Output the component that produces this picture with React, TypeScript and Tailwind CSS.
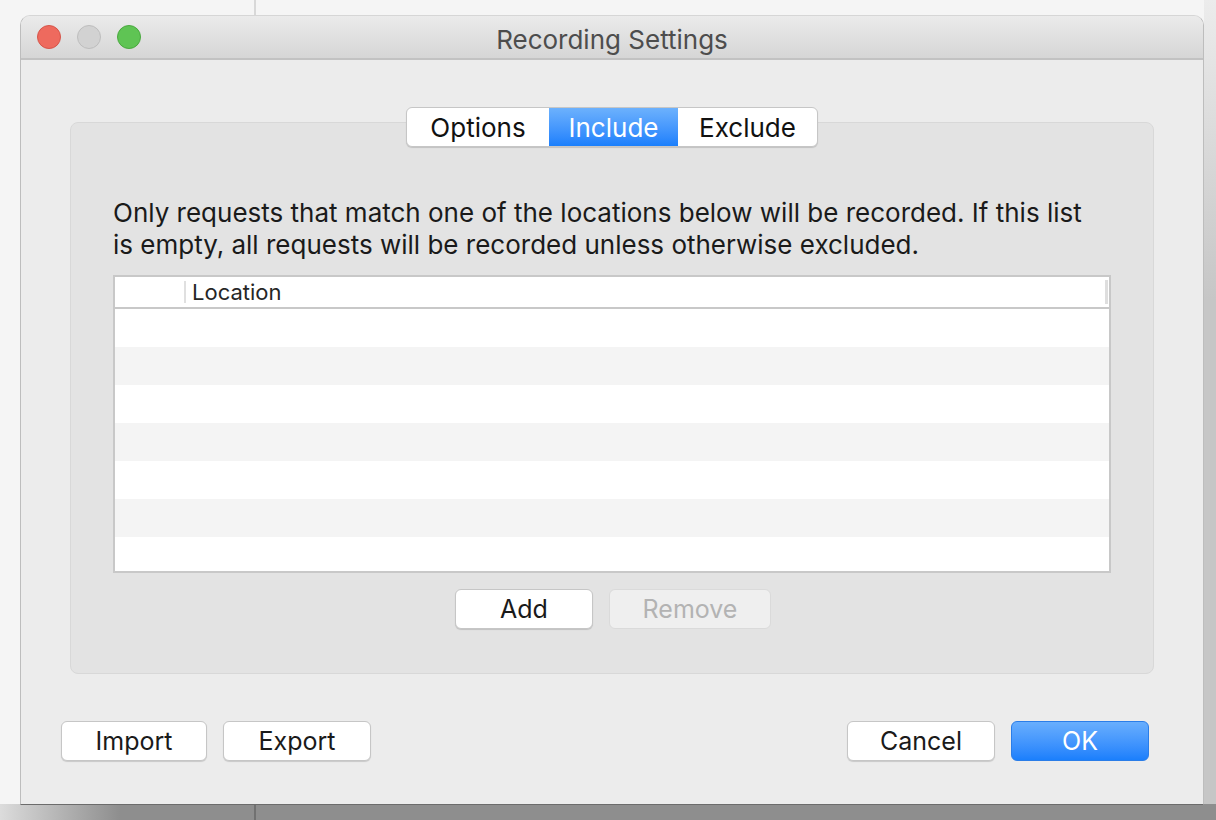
import React from "react";

const font = { fontFamily: "Inter, 'Liberation Sans', sans-serif" };

function TrafficLights() {
  return (
    <div className="flex items-center gap-4 pl-[16px]">
      <div className="w-6 h-6 rounded-full bg-[#ee6a5e] border border-[#d5554a]"></div>
      <div className="w-6 h-6 rounded-full bg-[#d2d2d2] border border-[#bdbdbd]"></div>
      <div className="w-6 h-6 rounded-full bg-[#5fc454] border border-[#4aa83f]"></div>
    </div>
  );
}

function Button({ label, wide = "w-[146px]", disabled = false, primary = false }: { label: string; wide?: string; disabled?: boolean; primary?: boolean }) {
  let cls = "bg-white text-[#1a1a1a] border border-[#c6c6c6] shadow-[0_1px_1px_rgba(0,0,0,0.15)]";
  if (disabled) cls = "bg-[#efefef] text-[#b3b3b3] border border-[#dadada]";
  if (primary) cls = "bg-linear-to-b from-[#68aefd] to-[#1a7ffc] text-white border border-[#2a7de8]";
  return (
    <button className={`${wide} h-10 rounded-[6px] text-[25px] leading-none flex items-center justify-center ${cls}`}>
      {label}
    </button>
  );
}

function LocationTable() {
  const rows = [0, 1, 2, 3, 4, 5, 6];
  return (
    <div className="mt-[14px] h-[298px] border-2 border-[#c8c8c8] bg-white flex flex-col overflow-hidden">
      <div className="h-8 flex items-center border-b-2 border-[#c8c8c8] shrink-0">
        <div className="w-[71px] h-[22px] border-r-2 border-[#e0e0e0]"></div>
        <div className="flex-1 pl-[6px] text-[22px] text-[#262626]">Location</div>
        <div className="w-[3px] h-[24px] bg-[#dedede] mr-[1px]"></div>
      </div>
      {rows.map((r) => (
        <div key={r} className={`h-[38px] shrink-0 ${r % 2 === 1 ? "bg-[#f4f4f4]" : "bg-white"}`}></div>
      ))}
    </div>
  );
}

export default function App() {
  return (
    <div className="relative w-[1216px] h-[820px] bg-[#f5f5f5] overflow-hidden" style={font}>
      <div className="absolute left-[254px] top-0 w-[2px] h-full bg-[#d8d8d8]"></div>
      <div className="absolute left-0 top-[804px] w-full h-[16px] bg-[#8e8e8e]"></div>
      <div className="absolute left-0 top-[804px] w-[120px] h-[16px] bg-linear-to-r from-[#dcdcdc] to-[#8e8e8e]"></div>
      <div className="absolute left-[254px] top-[804px] w-[2px] h-[16px] bg-[#717171]"></div>
      <div className="absolute right-0 top-0 w-[12px] h-[804px] bg-[#c6c6c6]"></div>
      <div className="absolute right-0 top-0 w-[12px] h-[300px] bg-linear-to-b from-[#ececec] to-[#c6c6c6]"></div>

      <div className="relative z-10 ml-[20px] pt-[15px] w-[1184px]">
        <div className="h-[790px] rounded-t-[10px] bg-[#ececec] border border-[#bdbdbd] border-t-[#d6d6d6] border-b-[#6c6c6c] flex flex-col overflow-hidden">
          <div className="h-[44px] shrink-0 bg-linear-to-b from-[#ebebeb] to-[#d6d6d6] border-b-2 border-[#c2c2c2] relative flex items-center">
            <TrafficLights />
            <div className="absolute inset-0 pt-[5px] flex items-center justify-center text-[26px] text-[#4d4d4d]">Recording Settings</div>
          </div>

          <div className="flex-1 flex flex-col px-[49px]">
            <div className="relative mt-[62px] h-[552px] rounded-[8px] bg-[#e3e3e3] border border-[#d8d8d8] px-[42px]">
              <div className="absolute -top-[16px] left-0 right-0 flex justify-center">
                <div className="flex h-10 rounded-[6px] overflow-hidden border border-[#c6c6c6] bg-white shadow-[0_1px_1px_rgba(0,0,0,0.15)] text-[26px]">
                  <div className="w-[142px] flex items-center justify-center text-[#111]">Options</div>
                  <div className="w-[129px] flex items-center justify-center text-white bg-linear-to-b from-[#6cb1fd] to-[#1a7ffc]">Include</div>
                  <div className="w-[139px] flex items-center justify-center text-[#111]">Exclude</div>
                </div>
              </div>
              <p className="mt-[74px] pr-[14px] text-[26px] leading-[32px] text-[#1a1a1a]">
                Only requests that match one of the locations below will be recorded. If this list is empty, all requests will be recorded unless otherwise excluded.
              </p>
              <LocationTable />
              <div className="flex justify-center gap-4 mt-4 pl-[2px]">
                <Button label="Add" wide="w-[138px]" />
                <Button label="Remove" wide="w-[162px]" disabled />
              </div>
            </div>

            <div className="flex justify-between items-center mt-[47px] -ml-[9px] mr-[5px]">
              <div className="flex gap-4">
                <Button label="Import" />
                <Button label="Export" wide="w-[148px]" />
              </div>
              <div className="flex gap-4">
                <Button label="Cancel" wide="w-[148px]" />
                <Button label="OK" wide="w-[138px]" primary />
              </div>
            </div>
          </div>
        </div>
      </div>
    </div>
  );
}
